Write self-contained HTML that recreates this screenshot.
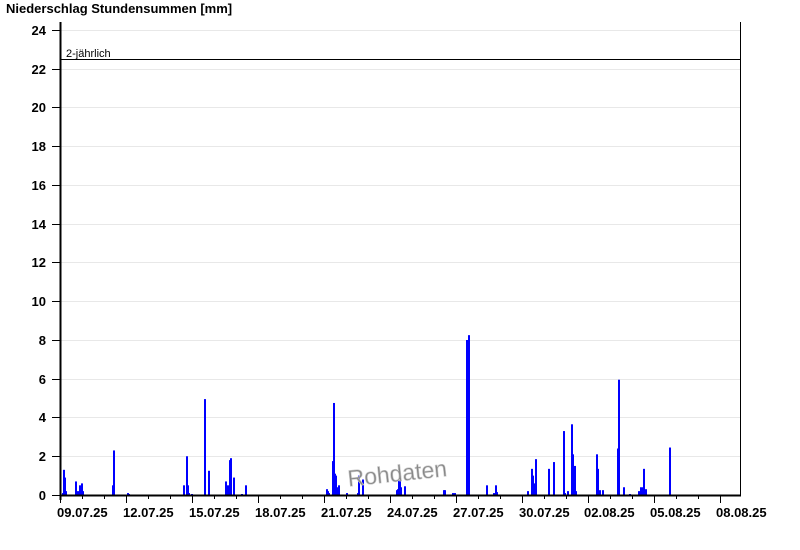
<!DOCTYPE html>
<html><head><meta charset="utf-8"><style>
html,body{margin:0;padding:0;background:#fff;width:800px;height:550px;overflow:hidden}
svg{display:block}
text{font-family:"Liberation Sans",Arial,sans-serif}
</style></head><body>
<svg width="800" height="550" xmlns="http://www.w3.org/2000/svg">
<text x="6" y="13" font-size="13" font-weight="bold" fill="#000">Niederschlag Stundensummen [mm]</text>
<g stroke="#e8e8e8" stroke-width="1">
<line x1="61" x2="740" y1="30.5" y2="30.5"/><line x1="61" x2="740" y1="69.5" y2="69.5"/>
<line x1="61" x2="740" y1="107.5" y2="107.5"/><line x1="61" x2="740" y1="146.5" y2="146.5"/>
<line x1="61" x2="740" y1="185.5" y2="185.5"/><line x1="61" x2="740" y1="224.5" y2="224.5"/>
<line x1="61" x2="740" y1="262.5" y2="262.5"/><line x1="61" x2="740" y1="301.5" y2="301.5"/>
<line x1="61" x2="740" y1="340.5" y2="340.5"/><line x1="61" x2="740" y1="379.5" y2="379.5"/>
<line x1="61" x2="740" y1="417.5" y2="417.5"/><line x1="61" x2="740" y1="456.5" y2="456.5"/>
</g>
<g font-size="13" font-weight="bold" text-anchor="end" fill="#000">
<text x="46" y="35">24</text><text x="46" y="74">22</text><text x="46" y="112">20</text>
<text x="46" y="151">18</text><text x="46" y="190">16</text><text x="46" y="229">14</text>
<text x="46" y="267">12</text><text x="46" y="306">10</text><text x="46" y="345">8</text>
<text x="46" y="384">6</text><text x="46" y="422">4</text><text x="46" y="461">2</text><text x="46" y="500">0</text>
</g>
<g stroke="#000" stroke-width="1">
<line x1="52" x2="61" y1="30.5" y2="30.5"/><line x1="52" x2="61" y1="69.5" y2="69.5"/>
<line x1="52" x2="61" y1="107.5" y2="107.5"/><line x1="52" x2="61" y1="146.5" y2="146.5"/>
<line x1="52" x2="61" y1="185.5" y2="185.5"/><line x1="52" x2="61" y1="224.5" y2="224.5"/>
<line x1="52" x2="61" y1="262.5" y2="262.5"/><line x1="52" x2="61" y1="301.5" y2="301.5"/>
<line x1="52" x2="61" y1="340.5" y2="340.5"/><line x1="52" x2="61" y1="379.5" y2="379.5"/>
<line x1="52" x2="61" y1="417.5" y2="417.5"/><line x1="52" x2="61" y1="456.5" y2="456.5"/>
<line x1="52" x2="61" y1="495.5" y2="495.5"/>
</g>
<line x1="61" x2="740" y1="59.5" y2="59.5" stroke="#000"/>
<text x="66" y="57" font-size="11" fill="#000">2-jährlich</text>
<g id="bars" fill="#0000ff"></g>
<text x="347" y="481" font-size="23" fill="#888" stroke="#ccc" stroke-width="0.6" transform="rotate(-6 400 470)">Rohdaten</text>
<line x1="60.5" x2="60.5" y1="22" y2="500" stroke="#000" stroke-width="2"/>
<line x1="740.5" x2="740.5" y1="22" y2="496" stroke="#000"/>
<line x1="60" x2="741" y1="495.5" y2="495.5" stroke="#000" stroke-width="2"/>
<g id="ticks" stroke="#000"></g>
<g font-size="13" font-weight="bold" fill="#000">
<text x="57" y="517">09.07.25</text><text x="123" y="517">12.07.25</text><text x="189" y="517">15.07.25</text>
<text x="255" y="517">18.07.25</text><text x="321" y="517">21.07.25</text><text x="387" y="517">24.07.25</text>
<text x="453" y="517">27.07.25</text><text x="519" y="517">30.07.25</text><text x="584" y="517">02.08.25</text>
<text x="650" y="517">05.08.25</text><text x="716" y="517">08.08.25</text>
</g>
</svg>
<script>
var b=[[62,.1],[63,1.3],[64,.9],[65,.2],[75,.7],[76,.2],[78,.2],[79,.5],[81,.6],[82,.2],[112,.5],[113,2.3],[127,.1],[128,.05],[183,.5],[186,2],[187,.5],[188,.1],[191,.05],[204,4.95],[208,1.25],[225,.7],[227,.5],[229,1.8],[230,1.9],[233,.9],[241,.05],[245,.5],[326,.3],[327,.2],[328,.1],[332,1.75],[333,4.75],[334,1.1],[335,1],[336,.4],[338,.5],[346,.1],[357,.1],[358,1],[362,.8],[396,.25],[397,.3],[398,.8],[399,1],[400,.4],[404,.45],[443,.25],[444,.25],[452,.1],[454,.1],[466,8],[468,8.25],[486,.5],[493,.1],[495,.5],[496,.15],[527,.2],[531,1.35],[532,1],[533,.6],[535,1.85],[548,1.35],[553,1.7],[563,3.3],[564,.1],[567,.2],[571,3.65],[572,2.1],[574,1.5],[575,.2],[596,2.1],[597,1.35],[599,.25],[602,.25],[617,2.4],[618,5.95],[623,.4],[629,.05],[638,.2],[640,.4],[642,.4],[643,1.35],[645,.3],[669,2.45]];
var g=document.getElementById('bars'),s='';
b.forEach(function(p){var h=Math.max(1,p[1]*19.375);s+='<rect x="'+p[0]+'" y="'+(495-h)+'" width="2" height="'+h+'"/>';});
g.innerHTML=s;
var t='';for(var d=0;d<=30;d++){var x=60.5+d*22;var l=(d%3==0)?8:4;t+='<line x1="'+x+'" x2="'+x+'" y1="495" y2="'+(495+l)+'"/>';}
document.getElementById('ticks').innerHTML=t;
</script>
</body></html>
